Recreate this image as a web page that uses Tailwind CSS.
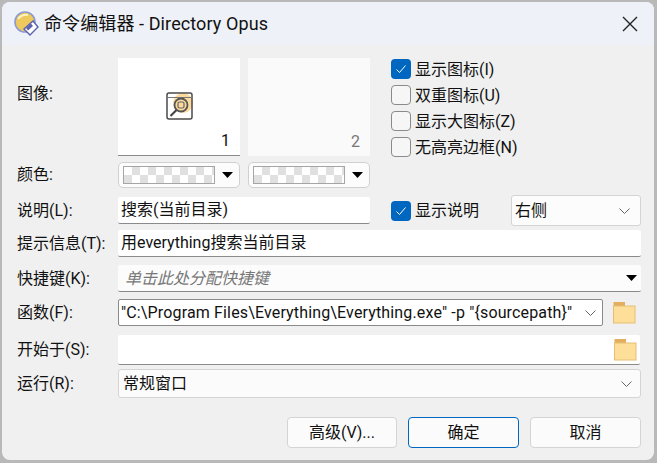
<!DOCTYPE html>
<html lang="zh-CN">
<head>
    <meta charset="UTF-8">
    <title>命令编辑器 - Directory Opus</title>
    <script src="https://cdn.jsdelivr.net/npm/@tailwindcss/browser@4"></script>
</head>
<body class="bg-[#b9b9b9] w-[657px] h-[463px] overflow-hidden font-['Roboto','Noto_Sans_CJK_SC',sans-serif] text-[16px] text-[#111]">
    <div class="ml-[2px] pt-[2px]">
        <div class="w-[652px] h-[458px] bg-[#f0f0f0] rounded-[8px] overflow-hidden">

            <!-- Title bar -->
            <div class="h-[43px] bg-[#eff1f8] flex items-center relative">
                <svg class="ml-[11px] w-[26px] h-[26px]" viewBox="0 0 26 26">
                    <circle cx="12" cy="11" r="10" fill="#eec95e" stroke="#8b9bd0" stroke-width="1.6"/>
                    <path d="M5 8 Q9 3 15 4" fill="none" stroke="#fff3c0" stroke-width="2"/>
                    <path d="M11 18 L20 10 L25 16 L17 24 Z" fill="#fff" stroke="#5a62b0" stroke-width="1.4"/>
                    <path d="M13 17 L18 12.5 L20 15 L15 19.5 Z" fill="#5a62b0"/>
                </svg>
                <span class="ml-[5px] text-[18px] tracking-[0.1px]">命令编辑器 - Directory Opus</span>
                <svg class="ml-auto mr-[16px] w-[16px] h-[16px]" viewBox="0 0 16 16">
                    <path d="M1 1 L15 15 M15 1 L1 15" stroke="#222" stroke-width="1.4" fill="none"/>
                </svg>
            </div>

            <div class="pl-[15px] w-[639px]">
                <!-- Image boxes -->
                <div class="flex mt-[13px] h-[98px]">
                    <div class="w-[101px] pt-[24px]">图像:</div>
                    <div class="w-[122px] h-[98px] bg-white border-b border-[#8a8a8a] relative flex items-center justify-center">
                        <svg class="w-[32px] h-[32px] -mt-[2px]" viewBox="0 0 32 32">
                            <circle cx="20" cy="13" r="10" fill="#fcd99c"/>
                            <rect x="4" y="3" width="25" height="26" rx="2" fill="none" stroke="#4a4a4a" stroke-width="1.5"/>
                            <path d="M4 7.5 H29" stroke="#777" stroke-width="1"/>
                            <circle cx="18" cy="15" r="6.5" fill="none" stroke="#555" stroke-width="1.8"/>
                            <rect x="15" y="12" width="6" height="6" rx="1.5" fill="none" stroke="#666" stroke-width="1.2"/>
                            <path d="M13.5 20 L7.5 26" stroke="#444" stroke-width="2.2"/>
                        </svg>
                        <span class="absolute right-[10px] bottom-[4px] leading-[20px]">1</span>
                    </div>
                    <div class="w-[122px] h-[98px] ml-[8px] bg-[#fafafa] relative">
                        <span class="absolute right-[10px] bottom-[4px] leading-[20px] text-[#777]">2</span>
                    </div>
                    <div class="ml-[21px] pt-[1px] flex flex-col gap-[6px]">
                        <div class="flex items-center h-[20px] gap-[4px]">
                            <span class="w-[20px] h-[20px] rounded-[4px] bg-[#0067c0] flex items-center justify-center">
                                <svg class="w-[12px] h-[12px]" viewBox="0 0 12 12"><path d="M1.5 6.5 L4.5 9.5 L10.5 2.5" fill="none" stroke="#fff" stroke-width="1"/></svg>
                            </span>
                            <span class="pt-[1px]">显示图标(I)</span>
                        </div>
                        <div class="flex items-center h-[20px] gap-[4px]">
                            <span class="w-[20px] h-[20px] rounded-[4px] border border-[#8a8a8a] bg-[#f6f6f6]"></span>
                            <span class="pt-[1px]">双重图标(U)</span>
                        </div>
                        <div class="flex items-center h-[20px] gap-[4px]">
                            <span class="w-[20px] h-[20px] rounded-[4px] border border-[#8a8a8a] bg-[#f6f6f6]"></span>
                            <span class="pt-[1px]">显示大图标(Z)</span>
                        </div>
                        <div class="flex items-center h-[20px] gap-[4px]">
                            <span class="w-[20px] h-[20px] rounded-[4px] border border-[#8a8a8a] bg-[#f6f6f6]"></span>
                            <span class="pt-[1px]">无高亮边框(N)</span>
                        </div>
                    </div>
                </div>

                <!-- Colours -->
                <div class="flex mt-[6px] h-[26px] items-center">
                    <div class="w-[101px]">颜色:</div>
                    <div class="w-[122px] h-[26px] bg-[#fcfcfc] border border-[#d0d0d0] rounded-[5px] flex items-center pl-[4px]">
                        <span class="w-[92px] h-[18px] border border-[#a5a5a5] bg-[conic-gradient(#e0e0e0_25%,#fff_0_50%,#e0e0e0_0_75%,#fff_0)] bg-[length:16px_16px]"></span>
                        <svg class="ml-[7px] w-[11px] h-[6px]" viewBox="0 0 11 6"><path d="M0 0 H11 L5.5 6 Z" fill="#000"/></svg>
                    </div>
                    <div class="w-[122px] h-[26px] ml-[8px] bg-[#fcfcfc] border border-[#d0d0d0] rounded-[5px] flex items-center pl-[4px]">
                        <span class="w-[92px] h-[18px] border border-[#a5a5a5] bg-[conic-gradient(#e0e0e0_25%,#fff_0_50%,#e0e0e0_0_75%,#fff_0)] bg-[length:16px_16px]"></span>
                        <svg class="ml-[7px] w-[11px] h-[6px]" viewBox="0 0 11 6"><path d="M0 0 H11 L5.5 6 Z" fill="#000"/></svg>
                    </div>
                </div>

                <!-- Description -->
                <div class="flex mt-[9px] h-[27px] items-center">
                    <div class="w-[101px] pt-[1px]">说明(L):</div>
                    <div class="w-[252px] h-[27px] bg-white border-b border-[#8a8a8a] rounded-[2px] pl-[3px] leading-[25px]">搜索(当前目录)</div>
                    <span class="ml-[21px] w-[20px] h-[20px] rounded-[4px] bg-[#0067c0] flex items-center justify-center">
                        <svg class="w-[12px] h-[12px]" viewBox="0 0 12 12"><path d="M1.5 6.5 L4.5 9.5 L10.5 2.5" fill="none" stroke="#fff" stroke-width="1"/></svg>
                    </span>
                    <span class="ml-[4px] w-[96px]">显示说明</span>
                    <div class="w-[130px] h-[31px] -my-[2px] bg-[#fcfcfc] border border-[#d4d4d4] rounded-[3px] flex items-center justify-between pl-[3px] pr-[10px]">
                        <span>右侧</span>
                        <svg class="w-[11px] h-[6px]" viewBox="0 0 11 6"><path d="M0.5 0.5 L5.5 5.5 L10.5 0.5" fill="none" stroke="#666" stroke-width="1"/></svg>
                    </div>
                </div>

                <!-- Tooltip -->
                <div class="flex mt-[6px] h-[27px] items-center">
                    <div class="w-[101px] whitespace-nowrap">提示信息(T):</div>
                    <div class="w-[523px] h-[27px] bg-white border-b border-[#8a8a8a] rounded-[2px] pl-[3px] leading-[25px]">用everything搜索当前目录</div>
                </div>

                <!-- Hotkey -->
                <div class="flex mt-[8px] h-[27px] items-center">
                    <div class="w-[101px] pt-[1px]">快捷键(K):</div>
                    <div class="w-[523px] h-[27px] bg-[#fcfcfc] border-b border-[#8a8a8a] rounded-[2px] pl-[7px] pr-[4px] flex items-center justify-between">
                        <span class="italic text-[#777] pt-[2px]">单击此处分配快捷键</span>
                        <svg class="w-[11px] h-[6px]" viewBox="0 0 11 6"><path d="M0 0 H11 L5.5 6 Z" fill="#000"/></svg>
                    </div>
                </div>

                <!-- Function -->
                <div class="flex mt-[7px] h-[27px] items-center">
                    <div class="w-[101px] pt-[1px]">函数(F):</div>
                    <div class="w-[485px] h-[27px] bg-white border border-[#8a8a8a] rounded-[2px] pl-[2px] pr-[6px] flex items-center justify-between">
                        <span class="whitespace-nowrap tracking-[0.15px] pt-[1px]">"C:\Program Files\Everything\Everything.exe" -p "{sourcepath}"</span>
                        <svg class="w-[11px] h-[6px] shrink-0" viewBox="0 0 11 6"><path d="M0.5 0.5 L5.5 5.5 L10.5 0.5" fill="none" stroke="#666" stroke-width="1"/></svg>
                    </div>
                    <svg class="ml-[10px] w-[23px] h-[23px]" viewBox="0 0 23 23">
                        <path d="M0.5 1 H12 V5 H0.5 Z" fill="#e3ae5e"/>
                        <rect x="0.5" y="5" width="21.5" height="17" fill="#fddf9a" stroke="#e6bd72"/>
                    </svg>
                </div>

                <!-- Start in -->
                <div class="flex mt-[9px] h-[30px] items-center">
                    <div class="w-[101px]">开始于(S):</div>
                    <div class="w-[522px] h-[30px] bg-white border-b border-[#8a8a8a] rounded-[2px] flex items-center justify-end pr-[3px]">
                        <svg class="w-[23px] h-[23px]" viewBox="0 0 23 23">
                            <path d="M0.5 1 H12 V5 H0.5 Z" fill="#e3ae5e"/>
                            <rect x="0.5" y="5" width="21.5" height="17" fill="#fddf9a" stroke="#e6bd72"/>
                        </svg>
                    </div>
                </div>

                <!-- Run -->
                <div class="flex mt-[4px] h-[29px] items-center">
                    <div class="w-[101px] pt-[1px]">运行(R):</div>
                    <div class="w-[523px] h-[29px] bg-[#fbfbfb] border border-[#d4d4d4] rounded-[3px] flex items-center justify-between pl-[4px] pr-[8px]">
                        <span class="pt-[1px]">常规窗口</span>
                        <svg class="w-[11px] h-[6px]" viewBox="0 0 11 6"><path d="M0.5 0.5 L5.5 5.5 L10.5 0.5" fill="none" stroke="#666" stroke-width="1"/></svg>
                    </div>
                </div>

                <!-- Buttons -->
                <div class="flex mt-[19px] justify-end gap-[11px]">
                    <button class="w-[110px] h-[31px] pt-[1px] bg-[#fbfbfb] border border-[#d4d4d4] rounded-[4px]">高级(V)...</button>
                    <button class="w-[111px] h-[31px] pt-[1px] bg-[#fbfbfb] border border-[#0067c0] rounded-[4px]">确定</button>
                    <button class="w-[111px] h-[31px] pt-[1px] bg-[#fbfbfb] border border-[#d4d4d4] rounded-[4px]">取消</button>
                </div>
            </div>
        </div>
    </div>
</body>
</html>
